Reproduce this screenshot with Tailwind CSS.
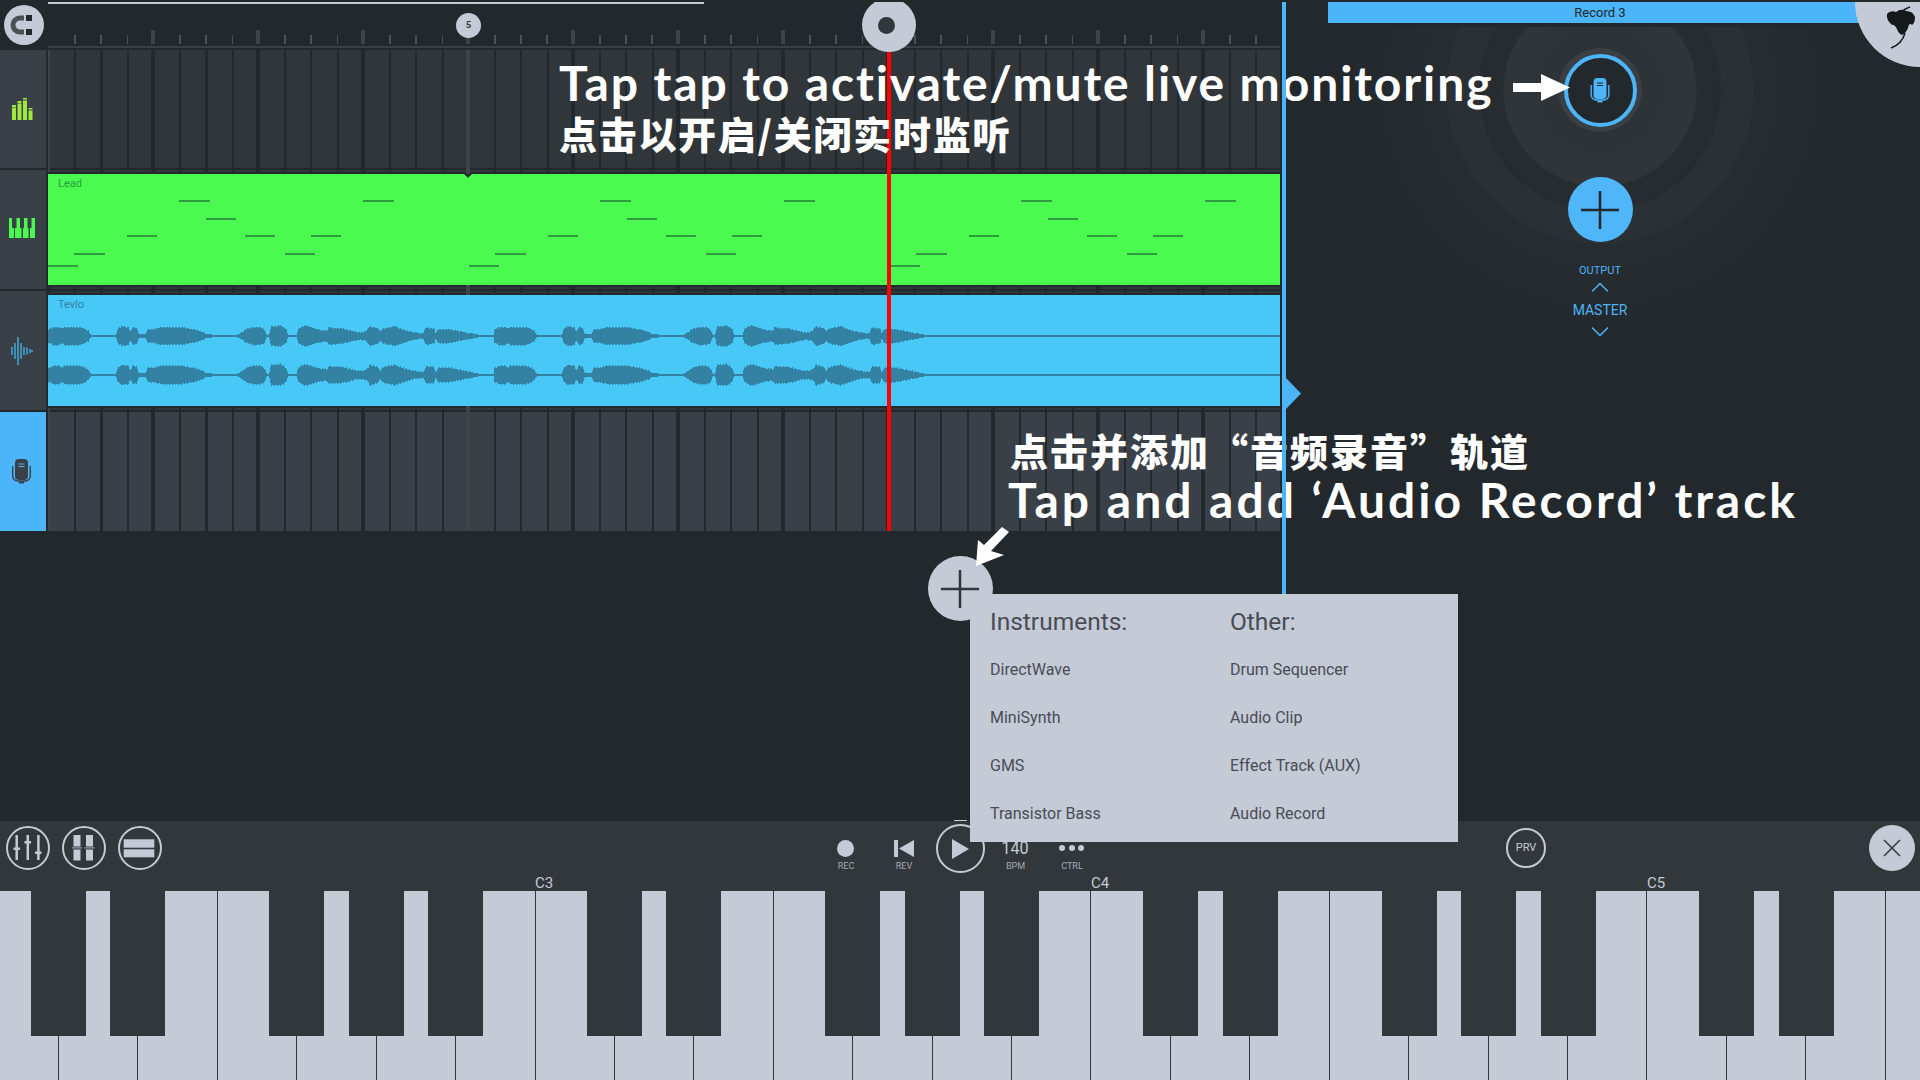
<!DOCTYPE html>
<html lang="en">
<head>
    <meta charset="UTF-8">
    <title>FL Studio Mobile</title>
    <script src="https://cdn.jsdelivr.net/npm/@tailwindcss/browser@4"></script>
</head>
<body class="relative w-[1920px] h-[1080px] overflow-hidden bg-[#23282c] font-['Roboto',sans-serif]">

    <!-- arrangement + right panel -->
    <div class="flex h-[821px]">
        <aside class="w-[48px] shrink-0 flex flex-col">
            <div class="h-[50px] flex items-center justify-center">
                <div class="w-[40px] h-[40px] rounded-full bg-[#c5cad7] flex items-center justify-center">
                    <svg width="40" height="40" viewBox="0 0 40 40" fill="none">
                        <path d="M20 13H16a7 7 0 0 0 0 14h4" stroke="#4a5056" stroke-width="5"/>
                        <rect x="22" y="10" width="6" height="6" fill="#23282c"/>
                        <rect x="22" y="24" width="6" height="6" fill="#23282c"/>
                    </svg>
                </div>
            </div>
            <div class="w-[46px] h-[118px] bg-[#3a4047] flex items-center justify-center pr-[2px]">
                <svg width="21" height="22" viewBox="0 0 21 22" fill="#a0e83f">
                    <rect x="0" y="7" width="4" height="2"/><rect x="0" y="9.500" width="4" height="12.500"/>
                    <rect x="5.500" y="3" width="4" height="2"/><rect x="5.500" y="5.500" width="4" height="16.500"/>
                    <rect x="11" y="0" width="4" height="1.500"/><rect x="11" y="2.500" width="4" height="19.500"/>
                    <rect x="16.500" y="10" width="4" height="1.500"/><rect x="16.500" y="12.500" width="4" height="9.500"/>
                </svg>
            </div>
            <div class="w-[46px] h-[119px] mt-[2px] bg-[#3a4047] flex items-center justify-center pr-[2px] pb-[3px]">
                <svg width="26" height="20" viewBox="0 0 26 20" fill="#4afa4f">
                    <path d="M0 0h3v10h2v10H0z"/><path d="M6 10h1.500V0h3.500v10h1.500v10H6z"/><path d="M14 10h1V0h3.500v10h1v10H14z"/><path d="M21 10h1.500V0H26v20h-5z"/>
                </svg>
            </div>
            <div class="w-[46px] h-[119px] mt-[2px] bg-[#3a4047] flex items-center justify-center pr-[2px]">
                <svg width="22" height="28" viewBox="0 0 22 28" stroke="#3fa9dc" stroke-width="1.500">
                    <path d="M1 10v8M4 6v16M7 0v28M10 6v16M13 10v8M16 10.500v7M19 12v4M21 13v2"/>
                </svg>
            </div>
            <div class="w-[46px] h-[119px] mt-[2px] bg-[#4cb4f9] flex items-center justify-center pr-[3px]">
                <svg width="19" height="25" viewBox="0 0 19 25" fill="none">
                    <rect x="3" y="0" width="13" height="21" rx="4" fill="#3a4047"/>
                    <path d="M6.500 5h6M6.500 7.500h6" stroke="#4cb4f9"/>
                    <path d="M.7 7v10a5 5 0 0 0 5 5h7.600a5 5 0 0 0 5-5V7" stroke="#3a4047" stroke-width="1.400"/>
                    <rect x="7" y="22.500" width="5" height="2" fill="#3a4047"/>
                </svg>
            </div>
        </aside>

        <main class="w-[1232px] shrink-0">
            <!-- ruler -->
            <div class="h-[50px] flex flex-col">
                <div class="h-[2px] mt-[2px] w-[656px] bg-[#c5cad7]"></div>
                <div class="h-[26px]"></div>
                <div class="relative h-[14px]">
                    <div class="absolute left-[26px] right-[20px] bottom-0 h-[9px] bg-[repeating-linear-gradient(90deg,#4a5157_0_1.500px,transparent_1.500px_26.250px)]"></div>
                    <div class="absolute left-[103px] right-[20px] top-0 h-[14px] bg-[repeating-linear-gradient(90deg,#3d4448_0_4px,transparent_4px_105px)]"></div>
                </div>
                <div class="h-[2px] mt-[2px] bg-[#3a4047]"></div>
                <div class="h-[2px]"></div>
            </div>

            <!-- tracks -->
            <div class="relative">
                <div class="h-[118px] bg-[#31363b] bg-[repeating-linear-gradient(90deg,#23282c_0_2px,transparent_2px_103px,#23282c_103px_105px),repeating-linear-gradient(90deg,#23282c_0_2px,transparent_2px_26.250px)]"></div>
                <div class="h-[2px]"></div>
                <div class="h-[2px] bg-[#32373b] bg-[repeating-linear-gradient(90deg,#23282c_0_2px,transparent_2px_103px,#23282c_103px_105px),repeating-linear-gradient(90deg,#23282c_0_2px,transparent_2px_26.250px)]"></div>
                <div class="h-[2px]"></div>

                <div class="relative h-[111px] bg-[#4afa4f] overflow-hidden">
                    <span class="absolute left-[10px] top-[3px] text-[11px] leading-[14px] text-[#2f9c3f]">Lead</span>
                    <svg class="absolute inset-0" width="1232" height="111" fill="#2f9c3f" shape-rendering="crispEdges">
                        <g id="notes">
                            <rect x="131" y="26" width="31" height="2"/><rect x="315" y="26" width="31" height="2"/>
                            <rect x="158" y="44" width="30" height="2"/>
                            <rect x="79" y="61" width="30" height="2"/><rect x="197" y="61" width="30" height="2"/><rect x="263" y="61" width="30" height="2"/>
                            <rect x="26" y="79" width="31" height="2"/><rect x="237" y="79" width="30" height="2"/>
                            <rect x="0" y="91" width="30" height="2"/>
                        </g>
                        <use href="#notes" x="421"/>
                        <use href="#notes" x="842"/>
                    </svg>
                </div>

                <div class="h-[2px]"></div>
                <div class="h-[2px] bg-[#32373b] bg-[repeating-linear-gradient(90deg,#23282c_0_2px,transparent_2px_103px,#23282c_103px_105px),repeating-linear-gradient(90deg,#23282c_0_2px,transparent_2px_26.250px)]"></div>
                <div class="h-[2px]"></div>
                <div class="h-[2px] bg-[#32373b] bg-[repeating-linear-gradient(90deg,#23282c_0_2px,transparent_2px_103px,#23282c_103px_105px),repeating-linear-gradient(90deg,#23282c_0_2px,transparent_2px_26.250px)]"></div>
                <div class="h-[2px]"></div>

                <div class="relative h-[111px] bg-[#48c8f7] overflow-hidden">
                    <span class="absolute left-[10px] top-[3px] text-[11px] leading-[14px] text-[#3382a4]">Tevlo</span>
                    <svg class="absolute inset-0" width="1232" height="111" shape-rendering="crispEdges">
                        <path id="wave" fill="#3382a4"/>
                    </svg>
                </div>

                <div class="h-[2px]"></div>
                <div class="h-[2px] bg-[#32373b] bg-[repeating-linear-gradient(90deg,#23282c_0_2px,transparent_2px_103px,#23282c_103px_105px),repeating-linear-gradient(90deg,#23282c_0_2px,transparent_2px_26.250px)]"></div>
                <div class="h-[2px]"></div>
                <div class="h-[119px] bg-[#3a4047] bg-[repeating-linear-gradient(90deg,#23282c_0_2px,transparent_2px_103px,#23282c_103px_105px),repeating-linear-gradient(90deg,#23282c_0_2px,transparent_2px_26.250px)]"></div>
            </div>
        </main>

        <div class="w-[2px] shrink-0"></div>
        <div class="relative w-[4px] shrink-0 bg-[#4cb4f9] z-20">
            <div class="absolute left-[4px] top-[378px] w-[15px] h-[31px] bg-[#4cb4f9] [clip-path:polygon(0_0,100%_50%,0_100%)]"></div>
        </div>

        <!-- right panel -->
        <section class="relative flex-1 flex flex-col">
            <div class="h-[2px]"></div>
            <div class="h-[21px] ml-[42px] bg-[#4cb4f9] flex items-center">
                <span class="w-[544px] text-center text-[13px] text-[#23282c] leading-none">Record 3</span>
            </div>
            <div class="flex-1 mt-[4px] bg-no-repeat bg-[radial-gradient(circle_at_314px_63px,#2b3035_0,#30353a_90px,#30353a_96px,#272c30_97px,#262b2f_120px,#2b3034_122px,#2b3034_153px,#272c30_154px,#23282c_260px)]">
                <div class="w-[628px] flex flex-col items-center">
                    <div class="mt-[21px] w-[84px] h-[84px] rounded-full bg-[#3a3f44] flex items-center justify-center">
                        <div class="w-[73px] h-[73px] rounded-full border-4 border-[#4cb4f9] bg-[#23282c] flex items-center justify-center">
                            <svg width="20" height="25" viewBox="0 0 19 25" fill="none" class="-ml-[1px]">
                                <rect x="3" y="0" width="13" height="21" rx="4" fill="#4cb4f9"/>
                                <path d="M6.500 5h6M6.500 7.500h6" stroke="#23282c"/>
                                <path d="M.7 7v10a5 5 0 0 0 5 5h7.600a5 5 0 0 0 5-5V7" stroke="#4cb4f9" stroke-width="1.400"/>
                                <rect x="7" y="22.500" width="5" height="2" fill="#4cb4f9"/>
                            </svg>
                        </div>
                    </div>
                    <div class="mt-[45px] w-[65px] h-[65px] rounded-full bg-[#4fb6fa] flex items-center justify-center">
                        <svg width="38" height="38" viewBox="0 0 38 38" stroke="#23282c" stroke-width="2.500"><path d="M0 19h38M19 0v38"/></svg>
                    </div>
                    <div class="mt-[22px] h-[14px] text-[11px] leading-[14px] text-[#4cb4f9]">OUTPUT</div>
                    <svg class="mt-[4px]" width="18" height="10" viewBox="0 0 18 10" fill="none" stroke="#4cb4f9" stroke-width="1.500"><path d="M1 9.500 9 1.500l8 8"/></svg>
                    <div class="mt-[9px] h-[18px] text-[14px] leading-[18px] text-[#4cb4f9]">MASTER</div>
                    <svg class="mt-[8px]" width="18" height="10" viewBox="0 0 18 10" fill="none" stroke="#4cb4f9" stroke-width="1.500"><path d="M1 .5l8 8 8-8"/></svg>
                </div>
            </div>
        </section>
    </div>

    <!-- transport toolbar -->
    <div class="flex items-start h-[70px] bg-[#32373b]">
        <button class="ml-[6px] mt-[5px] w-[44px] h-[44px] rounded-full border-2 border-[#c5cad7] shrink-0">
            <svg class="-m-[2px]" width="44" height="44" viewBox="0 0 44 44" stroke="#c5cad7" fill="#c5cad7"><path d="M10.700 9v25M21.800 9v25M32.400 9v25" stroke-width="2.500" fill="none"/><rect x="7.500" y="21.500" width="6.500" height="2.500" stroke="none"/><rect x="18.500" y="15" width="6.500" height="2.500" stroke="none"/><rect x="29" y="25.500" width="6.500" height="2.500" stroke="none"/></svg>
        </button>
        <button class="ml-[12px] mt-[5px] w-[44px] h-[44px] rounded-full border-2 border-[#c5cad7] shrink-0">
            <svg class="-m-[2px]" width="44" height="44" viewBox="0 0 44 44" fill="#c5cad7"><rect x="11.500" y="9" width="7" height="11.500"/><rect x="11.500" y="23.500" width="7" height="11"/><rect x="24" y="9" width="7" height="11.500"/><rect x="24" y="23.500" width="7" height="11"/><rect x="10" y="21.200" width="10" height="1.300" fill="#8d929c"/><rect x="22.500" y="21.200" width="10" height="1.300" fill="#8d929c"/></svg>
        </button>
        <button class="ml-[12px] mt-[5px] w-[44px] h-[44px] rounded-full border-2 border-[#c5cad7] shrink-0">
            <svg class="-m-[2px]" width="44" height="44" viewBox="0 0 44 44" fill="#c5cad7"><rect x="5.700" y="13.300" width="30.600" height="8.400"/><rect x="5.700" y="23.300" width="30.600" height="8"/></svg>
        </button>

        <div class="ml-[664px] mt-[12px] w-[40px] flex flex-col items-center shrink-0">
            <div class="h-[30px] flex items-center"><div class="w-[17px] h-[17px] rounded-full bg-[#c5cad7] -ml-[2px]"></div></div>
            <span class="-mt-[2px] text-[9px] leading-[10px] text-[#a5aab5]">REC</span>
        </div>
        <div class="ml-[18px] mt-[12px] w-[40px] flex flex-col items-center shrink-0">
            <div class="h-[30px] flex items-center">
                <svg width="20" height="17" viewBox="0 0 20 17" fill="#c5cad7"><rect width="4" height="17"/><path d="M20 0v17L5 8.500z"/></svg>
            </div>
            <span class="-mt-[2px] text-[9px] leading-[10px] text-[#a5aab5]">REV</span>
        </div>
        <div class="relative ml-[11.500px] mt-[3px] w-[49px] h-[49px] rounded-full border-2 border-[#c5cad7] shrink-0 flex items-center justify-center">
            <svg width="17" height="20" viewBox="0 0 17 20" fill="#c5cad7"><path d="M0 0l17 10L0 20z"/></svg>
            <div class="absolute -top-[6px] left-[16px] w-[13px] h-px bg-[#c5cad7]"></div>
        </div>
        <div class="ml-[11px] mt-[12px] w-[40px] flex flex-col items-center shrink-0">
            <div class="h-[30px] flex items-center text-[19px] scale-x-[0.85] text-[#c5cad7]">140</div>
            <span class="-mt-[2px] text-[9px] leading-[10px] text-[#a5aab5]">BPM</span>
        </div>
        <div class="ml-[16.500px] mt-[12px] w-[40px] flex flex-col items-center shrink-0">
            <div class="h-[30px] flex items-center gap-[3.500px] -ml-[1px]">
                <div class="w-[6px] h-[6px] rounded-full bg-[#c5cad7]"></div>
                <div class="w-[6px] h-[6px] rounded-full bg-[#c5cad7]"></div>
                <div class="w-[6px] h-[6px] rounded-full bg-[#c5cad7]"></div>
            </div>
            <span class="-mt-[2px] text-[9px] leading-[10px] text-[#a5aab5]">CTRL</span>
        </div>

        <div class="ml-[414px] mt-[7px] w-[40px] h-[40px] rounded-full border-2 border-[#c5cad7] shrink-0 flex items-center justify-center text-[11px] text-[#c5cad7]">PRV</div>
        <div class="ml-[323px] mt-[4px] w-[46px] h-[46px] rounded-full bg-[#c5cad7] shrink-0 flex items-center justify-center">
            <svg width="18" height="18" viewBox="0 0 18 18" stroke="#32373b" stroke-width="1.500"><path d="M1 1l16 16M17 1 1 17"/></svg>
        </div>
    </div>

    <!-- keyboard -->
    <div id="keys" class="relative flex h-[189px] bg-[#c5cad7]">
        <span class="absolute left-[535px] -top-[16px] text-[15px] leading-[16px] text-[#c5cad7]">C3</span>
        <span class="absolute left-[1091px] -top-[16px] text-[15px] leading-[16px] text-[#c5cad7]">C4</span>
        <span class="absolute left-[1647px] -top-[16px] text-[15px] leading-[16px] text-[#c5cad7]">C5</span>
    </div>

    <!-- overlays -->
    <div class="absolute left-[48px] top-[50px] w-[2px] h-[122px] bg-[#3e4448]"></div>
    <div class="absolute left-[48px] top-[408px] w-[2px] h-[123px] bg-[#3e4448]"></div>
    <div class="absolute left-[466px] top-[50px] w-[4px] h-[124px] bg-[#3e4448]"></div>
    <div class="absolute left-[466px] top-[285px] w-[4px] h-[10px] bg-[#3e4448]"></div>
    <div class="absolute left-[466px] top-[406px] w-[4px] h-[125px] bg-[#3e4448]"></div>
    <div class="absolute left-[464px] top-[174px] w-0 h-0 border-x-[4px] border-t-[4px] border-x-transparent border-t-[#23282c]"></div>

    <div class="absolute left-[456px] top-[13px] w-[25px] h-[25px] rounded-full bg-[#c5cad7] flex items-center justify-center text-[9px] font-bold text-[#32373b]">5</div>

    <div class="absolute left-[887px] top-[50px] w-[4px] h-[481px] bg-[#ff0000]"></div>
    <div class="absolute left-[862px] -top-[2px] w-[54px] h-[54px] rounded-full bg-[#c5cad7] flex items-center justify-center">
        <div class="w-[17px] h-[17px] rounded-full bg-[#32373b] -ml-[5px]"></div>
    </div>

    <div class="absolute right-[-65px] -top-[63px] w-[130px] h-[130px] rounded-full bg-[#c5cad7]"></div>
    <svg class="absolute left-[1880px] top-0" width="40" height="50" viewBox="0 0 40 50">
        <path d="M7 14Q10 10 16 12Q21 8 26 11Q33 11 35 17Q35 23 32 25Q29 22 28 28Q26 33 22 35Q18 33 17 29Q14 24 12 25Q6 20 7 14Z" fill="#16191c"/>
        <path d="M25 33Q22 44 11 48M21 13Q24 9 30 7" fill="none" stroke="#16191c" stroke-width="1.500"/>
    </svg>

    <div class="absolute left-0 top-0 w-full h-[2px] bg-[#23282c] z-30"></div>

    <!-- add-track button + menu -->
    <div class="absolute left-[927.500px] top-[556px] w-[65px] h-[65px] rounded-full bg-[#c5cad7] flex items-center justify-center">
        <svg width="38" height="38" viewBox="0 0 38 38" stroke="#32373b" stroke-width="2.500"><path d="M0 19h38M19 0v38"/></svg>
    </div>
    <div class="absolute z-30 left-[970px] top-[594px] w-[488px] h-[248px] bg-[#c5cad7] grid grid-cols-[240px_1fr] pl-[20px] pt-[4px] text-[#484d55] text-[16px]">
        <div class="flex flex-col">
            <div class="h-[48px] flex items-center text-[24.500px]">Instruments:</div>
            <div class="h-[48px] flex items-center">DirectWave</div>
            <div class="h-[48px] flex items-center">MiniSynth</div>
            <div class="h-[48px] flex items-center">GMS</div>
            <div class="h-[48px] flex items-center">Transistor Bass</div>
        </div>
        <div class="flex flex-col">
            <div class="h-[48px] flex items-center text-[24.500px]">Other:</div>
            <div class="h-[48px] flex items-center">Drum Sequencer</div>
            <div class="h-[48px] flex items-center">Audio Clip</div>
            <div class="h-[48px] flex items-center">Effect Track (AUX)</div>
            <div class="h-[48px] flex items-center">Audio Record</div>
        </div>
    </div>

    <!-- annotations -->
    <div class="absolute left-[559px] top-[54px] whitespace-nowrap font-['Lato',sans-serif] font-bold text-white text-[48px] leading-[58px] tracking-[1.900px]">Tap tap to activate/mute live monitoring</div>
    <div class="absolute left-[559px] top-[111px] whitespace-nowrap font-['Noto_Sans_CJK_SC',sans-serif] font-black text-white text-[38px] leading-[44px] tracking-[1.700px]">点击以开启/关闭实时监听</div>
    <div class="absolute left-[1010px] top-[428px] whitespace-nowrap font-['Noto_Sans_CJK_SC',sans-serif] font-black text-white text-[38px] leading-[44px] tracking-[2px]">点击并添加“音频录音”轨道</div>
    <div class="absolute left-[1008px] top-[475px] whitespace-nowrap font-['Lato',sans-serif] font-bold text-white text-[48px] leading-[50px] tracking-[3px]">Tap and add ‘Audio Record’ track</div>

    <svg class="absolute left-[1513px] top-[74px]" width="57" height="28" viewBox="0 0 57 28" fill="#fff"><path d="M0 9h28V0l29 13.500L28 27V18H0z"/></svg>
    <svg class="absolute left-[976px] top-[527px]" width="34" height="40" viewBox="0 0 34 40" fill="#fff"><path d="M0 39 2 13l6 5L26 0l7 5-18 19 13 4z"/></svg>

    <script>
        // white and black piano keys
        const keys = document.getElementById('keys');
        const first = document.createElement('div');
        first.className = 'w-[58px] h-full shrink-0';
        keys.appendChild(first);
        for (let i = 0; i < 24; i++) {
            const key = document.createElement('div');
            key.className = 'w-[79.430px] h-full shrink-0 border-l border-[#32373b]';
            keys.appendChild(key);
        }
        [31, 110, 269, 349, 428, 587, 666, 825, 905, 984, 1143, 1223, 1382, 1461, 1541, 1699, 1779].forEach(x => {
            const black = document.createElement('div');
            black.className = 'absolute top-0 w-[55px] h-[145px] bg-[#32373b]';
            black.style.left = x + 'px';
            keys.appendChild(black);
        });

        // waveform: [x, half height] read off the clip, in 1/3 px
        const env = [[0,22],[8,22],[15,28],[35,28],[42,20],[50,28],[95,28],[110,22],[122,16],[127,3],[204,3],[205,10],[212,24],[222,30],[244,26],[247,5],[250,22],[258,28],[268,22],[272,6],[295,6],[297,20],[320,22],[340,27],[400,27],[440,20],[465,12],[470,6],[490,6],[492,3],[565,3],[585,12],[595,22],[620,28],[645,25],[652,18],[655,3],[665,3],[667,30],[700,32],[716,20],[720,3],[747,3],[750,20],[762,28],[775,32],[810,20],[838,16],[842,26],[880,24],[930,12],[955,14],[965,30],[990,24],[997,10],[1003,22],[1040,30],[1080,16],[1095,12],[1128,8],[1132,26],[1160,24],[1163,4],[1170,22],[1200,22],[1240,14],[1290,4],[1300,3]];
        function amp(zx) {
            for (let i = 1; i < env.length; i++) {
                if (zx <= env[i][0]) {
                    const a = env[i - 1], b = env[i];
                    return (a[1] + (b[1] - a[1]) * (zx - a[0]) / (b[0] - a[0])) / 3;
                }
            }
            return 1;
        }
        function channel(offset, cy, seed) {
            const up = [], down = [];
            for (let px = 0; px <= 433; px++) {
                const h = amp(px * 3);
                const n = h > 3 ? ((px * seed) % 3) - 1 : 0;
                up.push(`${offset + px} ${Math.round(cy - h - n)}`);
                down.unshift(`${offset + px} ${Math.round(cy + h + n * 0.7)}`);
            }
            return 'M' + up.concat(down).join('L') + 'Z';
        }
        let d = '';
        [0, 446].forEach(offset => {
            d += channel(offset, 41, 7) + channel(offset, 80, 11);
        });
        d += 'M0 40h1232v2H0zM0 79h1232v2H0z';
        document.getElementById('wave').setAttribute('d', d);
    </script>
</body>
</html>
